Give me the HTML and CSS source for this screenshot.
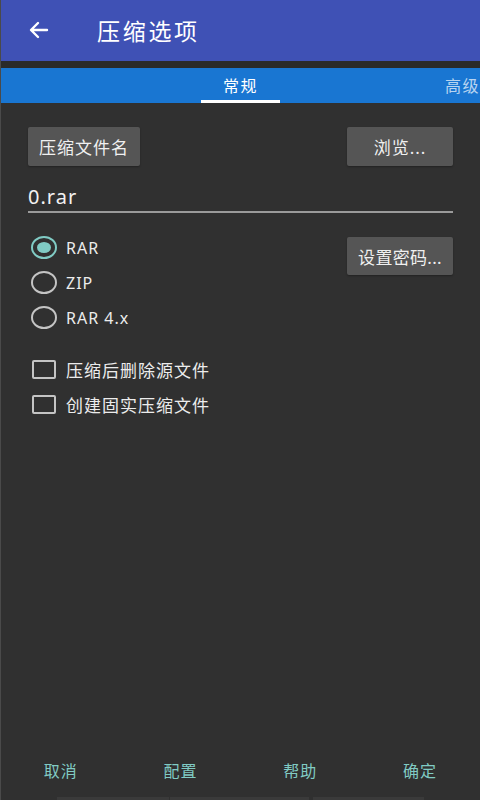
FILE: index.html
```html
<!DOCTYPE html>
<html lang="zh">
<head>
    <meta charset="UTF-8">
    <meta name="viewport" content="width=device-width, initial-scale=1.0">
    <title>压缩选项</title>
    <link rel="stylesheet" href="styles.css">
</head>
<body>

    <!-- Barra superior -->
    <div class="appbar">
        <svg class="back" width="24" height="24" viewBox="0 0 24 24">
            <path d="M20 12H5M11 5l-7 7 7 7" fill="none" stroke="#fff" stroke-width="2.4" stroke-linecap="round" stroke-linejoin="round"/>
        </svg>
        <span class="title">压缩选项</span>
    </div>
    <div class="strip"></div>

    <!-- Pestañas -->
    <div class="tabs">
        <div class="tab active">常规</div>
        <div class="tab">高级</div>
    </div>

    <div class="content">
        <div class="row">
            <button class="btn">压缩文件名</button>
            <button class="btn wide">浏览...</button>
        </div>

        <div class="field">0.rar</div>

        <div class="row top">
            <div class="radios">
                <label class="opt"><span class="radio checked"></span>RAR</label>
                <label class="opt"><span class="radio"></span>ZIP</label>
                <label class="opt"><span class="radio"></span>RAR 4.x</label>
            </div>
            <button class="btn wide pass">设置密码...</button>
        </div>

        <div class="checks">
            <label class="opt cjk"><span class="check"></span>压缩后删除源文件</label>
            <label class="opt cjk"><span class="check"></span>创建固实压缩文件</label>
        </div>
    </div>

    <!-- Botones inferiores -->
    <div class="footer">
        <span>取消</span>
        <span>配置</span>
        <span>帮助</span>
        <span>确定</span>
    </div>
    <div class="navbits">
        <i class="b1"></i><i class="b2"></i><i class="b3"></i>
    </div>

</body>
</html>
```

FILE: styles.css
```css
* { box-sizing: border-box; }
html, body { margin: 0; height: 100%; }
body { font-family: "Noto Sans", "Noto Sans CJK SC", sans-serif; background: #303030; color: #ececec; display: flex; flex-direction: column; width: 480px; height: 800px; overflow: hidden; border-left: 1px solid #4a4a4a; }

.appbar { height: 61px; background: #3f51b5; display: flex; align-items: center; color: white; flex-shrink: 0; }
.back { margin-left: 26px; margin-top: -1px; }
.title { margin-left: 46px; font-size: 23px; letter-spacing: 2.7px; margin-top: -1px; }
.strip { height: 7px; background: #2a2a2a; flex-shrink: 0; }

.tabs { height: 35px; background: #1976d2; display: flex; flex-shrink: 0; overflow: hidden; }
.tab { font-size: 16px; letter-spacing: 1.5px; color: rgba(255, 255, 255, 0.7); line-height: 37px; white-space: nowrap; }
.tab.active { color: white; width: 80px; margin-left: 200px; text-align: center; border-bottom: 3px solid white; line-height: 36px; }
.tab + .tab { margin-left: 165px; }

.content { flex: 1; padding: 24px 27px 0 27px; }
.row { display: flex; justify-content: space-between; }
.row.top { align-items: flex-start; margin-top: 17px; }
.btn { background: #555555; color: #f0f0f0; border: none; border-radius: 2px; height: 39px; padding: 0 11px; font-family: "Noto Sans", "Noto Sans CJK SC", sans-serif; font-size: 17px; letter-spacing: 1px; white-space: nowrap; box-shadow: 0 1px 2px rgba(0, 0, 0, 0.3); }
.btn.wide { width: 106px; padding: 0; }
.btn.pass { height: 38px; margin-top: 7px; letter-spacing: 0.3px; }

.field { margin-top: 17px; font-size: 20px; letter-spacing: 1px; color: #f2f2f2; border-bottom: 2px solid #9a9a9a; height: 30px; line-height: 28px; }

.radios { display: flex; flex-direction: column; }
.opt { display: flex; align-items: center; height: 35px; font-size: 16px; letter-spacing: 1px; color: #ececec; }
.opt.cjk { font-size: 17px; }
.radio { width: 26px; height: 23px; border: 2.5px solid #c4c4c4; border-radius: 50%; margin: 0 9px 0 3px; display: flex; align-items: center; justify-content: center; }
.radio.checked { border-color: #80cbc4; }
.radio.checked::after { content: ""; width: 14px; height: 11px; border-radius: 50%; background: #80cbc4; }

.checks { margin-top: 17px; display: flex; flex-direction: column; }
.check { width: 24px; height: 19px; border: 2px solid #c4c4c4; border-radius: 2px; margin: 0 10px 0 4px; }

.footer { height: 39px; display: flex; flex-shrink: 0; }
.footer span { flex: 1; text-align: center; color: #80cbc4; font-size: 16px; letter-spacing: 1px; line-height: 26px; }

.navbits { height: 3px; flex-shrink: 0; display: flex; }
.navbits i { display: block; height: 3px; background: #3a3a3a; }
.b1 { margin-left: 56px; width: 112px; }
.b2 { margin-left: 1px; width: 139px; }
.b3 { margin-left: 4px; width: 111px; }
```
